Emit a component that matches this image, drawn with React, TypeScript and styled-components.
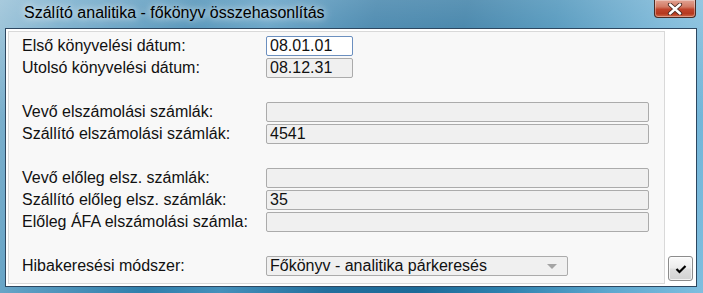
import React from 'react';
import styled, { createGlobalStyle } from 'styled-components';

const GlobalStyle = createGlobalStyle`
    html, body {
        margin: 0;
        padding: 0;
        background: #fff;
    }

    body {
        font-family: 'Liberation Sans', Arial, sans-serif;
    }
`;

const Window = styled.div`
    box-sizing: border-box;
    width: 703px;
    height: 293px;
    display: flex;
    flex-direction: column;
    padding: 0 6px 6px 5px;
    background:
        linear-gradient(180deg, rgba(255, 255, 255, 0.28) 0%, rgba(255, 255, 255, 0) 40%),
        linear-gradient(100deg, #86b6d0 0%, #5c9dc2 10%, #2f7eab 26%, #4590bb 36%, #236f9d 50%, #1c6a98 62%, #2f82af 74%, #5fa8cf 88%, #7fbedf 100%);
`;

const TitleBar = styled.div`
    height: 28px;
    display: flex;
    flex-direction: row;
    justify-content: space-between;
    align-items: flex-start;
`;

const Title = styled.div`
    padding-left: 19px;
    line-height: 26px;
    font-size: 16px;
    color: #000;
    text-shadow: 0 0 6px rgba(255, 255, 255, 0.8), 0 0 12px rgba(255, 255, 255, 0.6);
`;

const CloseButton = styled.div`
    box-sizing: border-box;
    width: 42px;
    height: 18px;
    margin-right: 1px;
    display: flex;
    align-items: center;
    justify-content: center;
    border: 1px solid #4a2b24;
    border-top: none;
    border-radius: 0 0 4px 4px;
    background: linear-gradient(180deg, #e2a393 0%, #d27a64 40%, #c0432b 55%, #b5391f 80%, #d06a4a 100%);
    box-shadow: inset 0 0 0 1px rgba(255, 255, 255, 0.35);
`;

const Client = styled.div`
    flex: 1;
    display: flex;
    flex-direction: row;
    padding: 2px;
    border: 1px solid #2d4760;
    background: #fff;
`;

const Panel = styled.div`
    box-sizing: border-box;
    width: 657px;
    display: grid;
    grid-template-columns: 244px auto;
    grid-auto-rows: 20px;
    row-gap: 2px;
    align-content: start;
    padding: 4px 0 0 13px;
    border: 1px solid #d9d9d9;
    background: #f8f8f8;
`;

const Label = styled.div`
    grid-column: 1;
    font-size: 16px;
    line-height: 20px;
    color: #111;
    white-space: nowrap;
`;

const Spacer = styled.div`
    grid-column: 1 / span 2;
`;

const Field = styled.div<{ $width : number; $active ?: boolean }>`
    grid-column: 2;
    box-sizing: border-box;
    width: ${p => p.$width}px;
    height: 20px;
    padding: 0 3px;
    border: 1px solid ${p => p.$active ? '#6b8fbf' : '#ababab'};
    border-radius: 2px;
    background: ${p => p.$active ? '#fff' : '#f0f0f0'};
    font-size: 16px;
    line-height: 18px;
    color: #111;
`;

const Select = styled(Field)`
    display: flex;
    flex-direction: row;
    justify-content: space-between;
    align-items: center;
    padding-right: 10px;
`;

const Arrow = styled.div`
    width: 0;
    height: 0;
    border-left: 5px solid transparent;
    border-right: 5px solid transparent;
    border-top: 5px solid #a4a4a4;
`;

const ButtonColumn = styled.div`
    flex: 1;
    display: flex;
    flex-direction: column;
    justify-content: flex-end;
    padding: 0 0 3px 3px;
`;

const OkButton = styled.div`
    box-sizing: border-box;
    width: 25px;
    height: 25px;
    display: flex;
    align-items: center;
    justify-content: center;
    border: 1px solid #8c8c8c;
    border-radius: 3px;
    background: linear-gradient(180deg, #fafafa 0%, #ececec 48%, #dedede 52%, #d2d2d2 100%);
    box-shadow: inset 0 0 0 1px rgba(255, 255, 255, 0.7);
`;

const LONG = 383;
const SHORT = 87;

export default function App() : JSX.Element
{
    return (
        <React.Fragment>
            <GlobalStyle />
            <Window>
                <TitleBar>
                    <Title>Szálító analitika - főkönyv összehasonlítás</Title>
                    <CloseButton>
                        <svg width="16" height="12" viewBox="0 0 16 12">
                            <path d="M3 1.5 L13 10.5 M13 1.5 L3 10.5" stroke="#4a2a22" strokeWidth="4.2" strokeLinecap="round" />
                            <path d="M3 1.5 L13 10.5 M13 1.5 L3 10.5" stroke="#fff" strokeWidth="2.4" strokeLinecap="round" />
                        </svg>
                    </CloseButton>
                </TitleBar>
                <Client>
                    <Panel>
                        <Label>Első könyvelési dátum:</Label>
                        <Field $width={SHORT} $active>08.01.01</Field>
                        <Label>Utolsó könyvelési dátum:</Label>
                        <Field $width={SHORT}>08.12.31</Field>
                        <Spacer />

                        <Label>Vevő elszámolási számlák:</Label>
                        <Field $width={LONG} />
                        <Label>Szállító elszámolási számlák:</Label>
                        <Field $width={LONG}>4541</Field>
                        <Spacer />

                        <Label>Vevő előleg elsz. számlák:</Label>
                        <Field $width={LONG} />
                        <Label>Szállító előleg elsz. számlák:</Label>
                        <Field $width={LONG}>35</Field>
                        <Label>Előleg ÁFA elszámolási számla:</Label>
                        <Field $width={LONG} />
                        <Spacer />

                        <Label>Hibakeresési módszer:</Label>
                        <Select $width={302}>
                            <span>Főkönyv - analitika párkeresés</span>
                            <Arrow />
                        </Select>
                    </Panel>
                    <ButtonColumn>
                        <OkButton>
                            <svg width="12" height="10" viewBox="0 0 12 10">
                                <path d="M1.5 5 L4.5 8 L10.5 2" fill="none" stroke="#000" strokeWidth="2.2" />
                            </svg>
                        </OkButton>
                    </ButtonColumn>
                </Client>
            </Window>
        </React.Fragment>
    );
}
